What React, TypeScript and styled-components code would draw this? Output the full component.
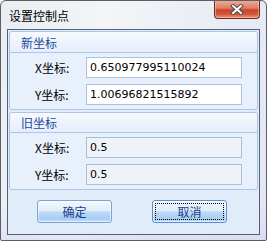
import styled, { createGlobalStyle } from "styled-components";

const GlobalStyle = createGlobalStyle`
  html, body {
    margin: 0;
    padding: 0;
    background: #eef1f5;
  }
  * {
    box-sizing: border-box;
  }
`;

const cjk = `"Noto Sans CJK SC", "Noto Sans", sans-serif`;

function App() {
  return (
    <>
      <GlobalStyle />
      <Window>
        <TitleBar>
          <Title>设置控制点</Title>
          <CloseButton>
            <svg width="14" height="11" viewBox="0 0 14 11">
              <path
                d="M3 2 L11 9 M11 2 L3 9"
                stroke="#4a4a4a"
                strokeWidth="4"
                strokeLinecap="square"
              />
              <path
                d="M3 2 L11 9 M11 2 L3 9"
                stroke="#ffffff"
                strokeWidth="2"
                strokeLinecap="square"
              />
            </svg>
          </CloseButton>
        </TitleBar>
        <Client>
          <Group>
            <GroupHeader>新坐标</GroupHeader>
            <GroupBody>
              <Row>
                <Label>X坐标:</Label>
                <Field>0.650977995110024</Field>
              </Row>
              <Row>
                <Label>Y坐标:</Label>
                <Field>1.00696821515892</Field>
              </Row>
            </GroupBody>
          </Group>
          <Group>
            <GroupHeader compact>旧坐标</GroupHeader>
            <GroupBody>
              <Row>
                <Label>X坐标:</Label>
                <Field readOnly>0.5</Field>
              </Row>
              <Row>
                <Label>Y坐标:</Label>
                <Field readOnly>0.5</Field>
              </Row>
            </GroupBody>
          </Group>
          <ButtonRow>
            <Button>确定</Button>
            <Button focused>
              <FocusRing>取消</FocusRing>
            </Button>
          </ButtonRow>
        </Client>
      </Window>
    </>
  );
}

const Window = styled.div`
  width: 267px;
  height: 241px;
  border: 1px solid #5a5f66;
  border-radius: 6px 6px 2px 2px;
  padding: 0 6px 5px 6px;
  display: flex;
  flex-direction: column;
  background: linear-gradient(
      to bottom,
      rgba(255, 255, 255, 0) 85%,
      rgba(200, 200, 240, 0.35) 100%
    ),
    linear-gradient(
      100deg,
      #e9eef2 0%,
      #f3f5f8 35%,
      #eceff4 60%,
      #e4e6f4 100%
    );
  overflow: hidden;
`;

const TitleBar = styled.div`
  height: 28px;
  display: flex;
  justify-content: space-between;
  align-items: flex-start;
`;

const Title = styled.div`
  font-family: ${cjk};
  font-size: 12px;
  line-height: 16px;
  color: #000;
  padding: 7px 0 0 2px;
`;

const CloseButton = styled.div`
  width: 46px;
  height: 19px;
  margin-top: -1px;
  border: 1px solid #6b2a22;
  border-top: none;
  border-radius: 0 0 4px 4px;
  background: linear-gradient(
    to bottom,
    #eeae9c 0%,
    #df7f66 45%,
    #cc4327 55%,
    #d4573a 80%,
    #ec9b7c 100%
  );
  box-shadow: inset 0 0 0 1px rgba(255, 210, 190, 0.5);
  display: flex;
  align-items: center;
  justify-content: center;
`;

const Client = styled.div`
  flex: 1;
  border: 1px solid #56606e;
  background: #e1ecfa;
  padding: 1px 1px 0 1px;
  display: flex;
  flex-direction: column;
  gap: 2px;
`;

const Group = styled.div`
  border: 1px solid #a9c5ea;
  border-radius: 3px;
  background: #e8f0fb;
  display: flex;
  flex-direction: column;
`;

const GroupHeader = styled.div<{ compact?: boolean }>`
  height: ${({ compact }) => (compact ? "20px" : "21px")};
  padding: ${({ compact }) => (compact ? "1px" : "2px")} 0 0 11px;
  font-family: ${cjk};
  font-size: 12px;
  line-height: 18px;
  color: #1b4797;
  background: linear-gradient(to bottom, #f6f9fe 0%, #e6eefb 100%);
  border-bottom: 1px solid #a9c5ea;
  border-radius: 3px 3px 0 0;
`;

const GroupBody = styled.div`
  padding: 4px 0 4px 25px;
  display: flex;
  flex-direction: column;
  gap: 6px;
`;

const Row = styled.div`
  display: flex;
  align-items: center;
`;

const Label = styled.div`
  width: 51px;
  font-family: ${cjk};
  font-size: 12px;
  line-height: 16px;
  color: #000;
`;

const Field = styled.div<{ readOnly?: boolean }>`
  width: 156px;
  height: 21px;
  border: 1px solid ${({ readOnly }) => (readOnly ? "#a8bedc" : "#abc1e0")};
  background: ${({ readOnly }) => (readOnly ? "#eef3fa" : "#ffffff")};
  padding: 0 3px;
  font-family: "DejaVu Sans", sans-serif;
  font-size: 11px;
  line-height: 19px;
  color: #000;
  white-space: nowrap;
  overflow: hidden;
`;

const ButtonRow = styled.div`
  display: flex;
  gap: 40px;
  padding: 8px 0 0 28px;
`;

const Button = styled.div<{ focused?: boolean }>`
  width: 75px;
  height: 23px;
  border: 1px solid ${({ focused }) => (focused ? "#5a8ed0" : "#7ea3d3")};
  border-radius: 3px;
  background: linear-gradient(
    to bottom,
    #f2f7fd 0%,
    #e0ecfa 48%,
    #bcd9f6 52%,
    #a8cdf3 85%,
    #c6e0f8 100%
  );
  box-shadow: inset 0 0 0 1px rgba(255, 255, 255, 0.55);
  display: flex;
  align-items: center;
  justify-content: center;
  padding: 2px;
  font-family: ${cjk};
  font-size: 12px;
  line-height: 16px;
  color: #1a3f8c;
`;

const FocusRing = styled.div`
  width: 100%;
  height: 100%;
  border: 1px dotted #000;
  display: flex;
  align-items: center;
  justify-content: center;
`;

export default App;
